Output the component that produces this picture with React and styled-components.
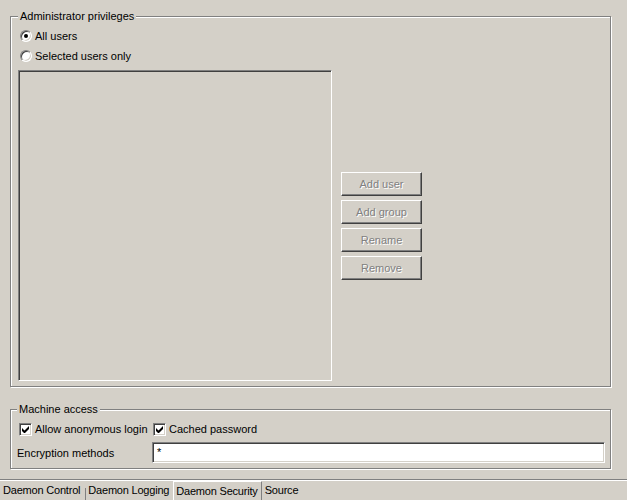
import React from "react";
import styled, { createGlobalStyle } from "styled-components";

const GlobalStyle = createGlobalStyle`
  html, body {
    margin: 0;
    padding: 0;
    background: #d4d0c8;
  }
  body {
    font-family: "Liberation Sans", Arial, sans-serif;
    font-size: 11px;
    color: #000;
  }
`;

const Page = styled.div`
  display: flex;
  flex-direction: column;
  height: 500px;
  width: 627px;
  background: #d4d0c8;
  overflow: hidden;
`;

const Content = styled.div`
  display: flex;
  flex-direction: column;
  padding: 16px 16px 0 10px;
`;

const Group = styled.div`
  position: relative;
  box-sizing: border-box;
  height: ${(p) => p.$height}px;
  margin-top: ${(p) => p.$top || 0}px;
  border: 1px solid #808080;
  box-shadow: inset 1px 1px #fff, 1px 1px #fff;
  padding: ${(p) => p.$pad};
`;

const Legend = styled.span`
  position: absolute;
  top: -7px;
  left: ${(p) => p.$left}px;
  padding: 0 2px;
  background: #d4d0c8;
  line-height: 13px;
`;

const OptionRow = styled.label`
  display: flex;
  align-items: center;
  height: 20px;
  gap: 3px;
`;

const Radio = styled.span`
  position: relative;
  box-sizing: border-box;
  width: 12px;
  height: 12px;
  border-radius: 50%;
  background: #fff;
  border: 1px solid;
  border-color: #808080 #fff #fff #808080;
  box-shadow: inset 1px 1px #404040, inset -1px -1px #d4d0c8;

  &::after {
    content: "";
    display: ${(p) => (p.$checked ? "block" : "none")};
    position: absolute;
    left: 3px;
    top: 3px;
    width: 4px;
    height: 4px;
    border-radius: 50%;
    background: #000;
  }
`;

const ListRow = styled.div`
  display: flex;
  align-items: center;
  gap: 9px;
  margin-top: 4px;
  margin-left: -2px;
`;

const Sunken = styled.div`
  box-sizing: border-box;
  border: 1px solid;
  border-color: #808080 #fff #fff #808080;
  box-shadow: inset 1px 1px #404040, inset -1px -1px #d4d0c8;
`;

const ListBox = styled(Sunken)`
  width: 314px;
  height: 311px;
  background: #d4d0c8;
`;

const ButtonColumn = styled.div`
  display: flex;
  flex-direction: column;
  gap: 4px;
`;

const Button = styled.button`
  box-sizing: border-box;
  width: 81px;
  height: 24px;
  padding: 0;
  font-family: inherit;
  font-size: 11px;
  background: #d4d0c8;
  color: #808080;
  text-shadow: 1px 1px #fff;
  border: 1px solid;
  border-color: #fff #404040 #404040 #fff;
  box-shadow: inset -1px -1px #808080;
`;

const FormGrid = styled.div`
  display: grid;
  grid-template-columns: 135px 1fr;
  grid-template-rows: 18px 21px;
  row-gap: 4px;
  align-items: center;
`;

const CheckItem = styled.label`
  display: flex;
  align-items: center;
  gap: 3px;
  margin-left: ${(p) => p.$offset}px;
  white-space: nowrap;
`;

const Box = styled(Sunken)`
  position: relative;
  width: 13px;
  height: 13px;
  background: #fff;
  display: flex;
  align-items: center;
  justify-content: center;
`;

const FieldLabel = styled.span`
  white-space: nowrap;
`;

const Input = styled(Sunken)`
  height: 21px;
  background: #fff;
  padding: 3px 4px;
  line-height: 13px;
`;

const TabBar = styled.div`
  display: flex;
  margin-top: auto;
  height: 20px;
  border-top: 1px solid #808080;
  box-shadow: inset 0 1px #fff;
  letter-spacing: -0.2px;
`;

const Tab = styled.div`
  box-sizing: border-box;
  display: flex;
  align-items: center;
  padding: 0 ${(p) => p.$r}px 0 ${(p) => p.$l}px;
  margin-top: ${(p) => (p.$active ? 1 : 0)}px;
  white-space: nowrap;
  ${(p) =>
    p.$active &&
    `
    border: 1px solid;
    border-color: #fff #808080 transparent #fff;
    border-bottom: none;
  `}
`;

const Separator = styled.span`
  align-self: flex-end;
  width: 1px;
  height: 12px;
  background: #808080;
  margin-right: 1px;
`;

const Check = () => (
  <svg width="7" height="7" viewBox="0 0 7 7">
    <path d="M0 2v3l2 2h1l4-4V0L2.5 4.5z" fill="#000" />
  </svg>
);

export default function App() {
  return (
    <Page>
      <GlobalStyle />
      <Content>
        <Group $height={371} $pad="9px 8px 0 9px">
          <Legend $left={7}>Administrator privileges</Legend>
          <OptionRow>
            <Radio $checked />
            All users
          </OptionRow>
          <OptionRow>
            <Radio />
            Selected users only
          </OptionRow>
          <ListRow>
            <ListBox />
            <ButtonColumn>
              <Button disabled>Add user</Button>
              <Button disabled>Add group</Button>
              <Button disabled>Rename</Button>
              <Button disabled>Remove</Button>
            </ButtonColumn>
          </ListRow>
        </Group>

        <Group $height={60} $top={22} $pad="10px 5px 0 6px">
          <Legend $left={6}>Machine access</Legend>
          <FormGrid>
            <CheckItem $offset={2}>
              <Box>
                <Check />
              </Box>
              Allow anonymous login
            </CheckItem>
            <CheckItem $offset={1}>
              <Box>
                <Check />
              </Box>
              Cached password
            </CheckItem>
            <FieldLabel>Encryption methods</FieldLabel>
            <Input>*</Input>
          </FormGrid>
        </Group>
      </Content>

      <TabBar>
        <Tab $l={3} $r={5}>Daemon Control</Tab>
        <Separator />
        <Tab $l={1} $r={4}>Daemon Logging</Tab>
        <Tab $active $l={2} $r={3}>Daemon Security</Tab>
        <Tab $l={3} $r={3}>Source</Tab>
      </TabBar>
    </Page>
  );
}
